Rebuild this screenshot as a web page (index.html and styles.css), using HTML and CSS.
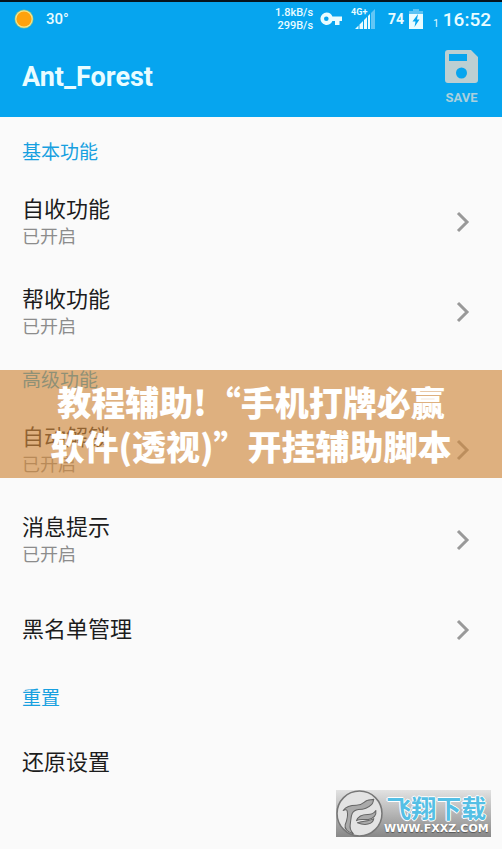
FILE: index.html
```html
<!DOCTYPE html>
<html lang="zh-CN">
<head>
<meta charset="utf-8">
<meta name="viewport" content="width=device-width, initial-scale=1">
<title>Ant_Forest</title>
<link rel="stylesheet" href="styles.css">
</head>
<body>
<header class="top">
  <div class="status">
    <svg class="sun" viewBox="0 0 20 20" aria-hidden="true"><circle cx="10" cy="10" r="9.5" fill="#7fc08f"/><circle cx="10" cy="10" r="8.8" fill="#f6e58e"/><circle cx="10" cy="10" r="7.6" fill="#ffa20d"/></svg>
    <span class="temp">30°</span>
    <span class="rates"><span>1.8kB/s</span><span>299B/s</span></span>
    <svg class="key" viewBox="0 0 22 14" aria-hidden="true"><path fill="#e9fcff" fill-rule="evenodd" d="M6.500 0.500A6.200 6.200 0 1 0 12.400 9H15v4h4.500V9H22V4.500H12.400A6.200 6.200 0 0 0 6.500.5ZM6.300 4.500a2.300 2.300 0 1 1 0 4.600 2.300 2.300 0 0 1 0-4.600Z"/></svg>
    <span class="signal">
      <span class="network">4G+</span>
      <svg class="bars" viewBox="0 0 20 20" aria-hidden="true"><path fill="#e9fcff" d="M0 20 3.500 16.500V20ZM4.500 15.500 8 12V20H4.500ZM9 11 12 8V20H9ZM13 7 15 5V20H13Z"/><path fill="#62c6f5" d="M16 4 20 0V20H16Z"/></svg>
    </span>
    <span class="level">74</span>
    <svg class="battery" viewBox="0 0 14 20" aria-hidden="true"><path fill="#5cc3f4" d="M4 0H10V2H14V5H0V2H4Z"/><path fill="#e9fcff" d="M0 5H14V20H0Z"/><path fill="#06a5ef" d="M9 5 3.500 12.500H6.500L5.500 18 10.500 10.500H8Z"/></svg>
    <span class="sim">1</span>
    <time class="clock">16:52</time>
  </div>
  <div class="bar">
    <h1 class="app-title">Ant_Forest</h1>
    <button class="save" type="button">
      <svg class="save-icon" viewBox="0 0 33 33" aria-hidden="true"><path fill="#bccfd2" fill-rule="evenodd" d="M3 0H26L33 7V30a3 3 0 0 1-3 3H3a3 3 0 0 1-3-3V3A3 3 0 0 1 3 0ZM4 4V11H22V4ZM16.500 17.500a5.500 5.500 0 1 0 0 11 5.500 5.500 0 0 0 0-11Z"/></svg>
      <span>SAVE</span>
    </button>
  </div>
</header>

<main class="settings">
  <h2 class="section">基本功能</h2>
  <a class="row" href="#collect">
    <span class="text"><span class="name">自收功能</span><span class="state">已开启</span></span>
    <svg class="chevron" viewBox="0 0 14 22" aria-hidden="true"><path d="M2 2 11 11 2 20"/></svg>
  </a>
  <a class="row" href="#help">
    <span class="text"><span class="name">帮收功能</span><span class="state">已开启</span></span>
    <svg class="chevron" viewBox="0 0 14 22" aria-hidden="true"><path d="M2 2 11 11 2 20"/></svg>
  </a>

  <h2 class="section">高级功能</h2>
  <a class="row" href="#unlock">
    <span class="text"><span class="name">自动解锁</span><span class="state">已开启</span></span>
    <svg class="chevron" viewBox="0 0 14 22" aria-hidden="true"><path d="M2 2 11 11 2 20"/></svg>
  </a>
  <a class="row" href="#notice">
    <span class="text"><span class="name">消息提示</span><span class="state">已开启</span></span>
    <svg class="chevron" viewBox="0 0 14 22" aria-hidden="true"><path d="M2 2 11 11 2 20"/></svg>
  </a>
  <a class="row" href="#blacklist">
    <span class="text"><span class="name">黑名单管理</span></span>
    <svg class="chevron" viewBox="0 0 14 22" aria-hidden="true"><path d="M2 2 11 11 2 20"/></svg>
  </a>

  <h2 class="section">重置</h2>
  <a class="row row-short" href="#reset">
    <span class="text"><span class="name">还原设置</span></span>
  </a>
</main>

<p class="banner">教程辅助!“手机打牌必赢<br>软件(透视)”开挂辅助脚本</p>

<aside class="watermark">
  <svg class="mark" viewBox="0 0 46 46" aria-hidden="true">
    <circle cx="23" cy="23" r="22" fill="#e3e3e3" stroke="#777" stroke-width="1.500"/>
    <g fill="#aaa" stroke="#666" stroke-width="1" stroke-linejoin="round">
      <path d="M7 20C10 16 15 15 20 15 27 15 27 11 31 10 33 9 35 10 37 9 36 11 37 12 35 14 31 18 27 19 22 19 14 20 15 27 14 33 13 38 15 41 17 43 11 41 8 38 9 34 11 29 12 25 11 21 11 19 9 19 7 20Z"/>
      <path d="M20 30C22 25 26 24 31 24 35 24 37 23 39 20 40 26 36 28 31 29 26 29 23 28 20 30Z"/>
      <path d="M21 32C26 30 32 31 37 28 36 34 28 35 21 32Z"/>
    </g>
  </svg>
  <span class="brand"><span class="brand-name">飞翔下载</span><span class="brand-url">WWW.FXXZ.COM</span></span>
</aside>
</body>
</html>
```
FILE: styles.css
```css
* { box-sizing: border-box; }

body {
  position: relative;
  min-height: 100vh;
  margin: 0;
  background: #fafafa;
  color: #1c1c1c;
  font-family: Roboto, "Noto Sans CJK SC", sans-serif;
}

h1, h2, p { margin: 0; }

.top {
  border-top: 2px solid #06131c;
  background: #06a5ef;
  color: #e9fcff;
}

.status {
  display: flex;
  align-items: center;
  height: 34px;
  padding: 0 11px 0 14px;
}

.sun { width: 20px; height: 20px; }
.temp { margin-left: 12px; font-size: 15px; font-weight: 500; }

.rates {
  display: flex;
  flex-direction: column;
  margin-left: auto;
  font-size: 11px;
  font-weight: 500;
  line-height: 13px;
  text-align: right;
}

.key { width: 22px; height: 14px; margin-left: 7px; }

.signal { position: relative; display: flex; width: 24px; margin-left: 9px; justify-content: flex-end; }
.network { position: absolute; top: -2px; left: 0; font-size: 9px; font-weight: 700; line-height: 10px; }
.bars { width: 20px; height: 20px; }
.level { margin-left: 13px; font-size: 14px; font-weight: 700; }
.battery { width: 14px; height: 20px; margin-left: 5px; }
.sim { margin: 8px 0 0 10px; font-size: 10px; }
.clock { margin-left: 4px; font-size: 19px; font-weight: 500; }

.bar {
  display: flex;
  align-items: center;
  justify-content: space-between;
  height: 81px;
  padding: 0 24px 0 22px;
}

.app-title { font-size: 27px; font-weight: 700; line-height: 32px; }

.save {
  display: flex;
  flex-direction: column;
  align-items: center;
  gap: 7px;
  padding: 2px 0 0;
  border: 0;
  background: none;
  color: #a9d0dd;
  font: 700 13px/16px Roboto, sans-serif;
}
.save-icon { width: 33px; height: 33px; }

.settings { padding-top: 12px; }

.section {
  padding-left: 22px;
  color: #17a0e0;
  font-size: 19px;
  font-weight: 400;
  line-height: 48px;
}

.row {
  display: flex;
  align-items: center;
  justify-content: space-between;
  min-height: 90px;
  padding: 0 32px 0 22px;
  color: inherit;
  text-decoration: none;
}
.row-short { min-height: 80px; }

.text { display: flex; flex-direction: column; }
.name { font-size: 22px; line-height: 30px; }
.state { color: #8c8c8c; font-size: 18px; line-height: 24px; }

.chevron {
  width: 14px;
  height: 22px;
  fill: none;
  stroke: #999;
  stroke-width: 3;
}

.banner {
  position: absolute;
  top: 370px;
  right: 0;
  left: 0;
  padding: 10px 0;
  background: rgba(207, 136, 61, 0.65);
  color: #fff;
  font: 900 34px/44px "Noto Sans CJK SC", sans-serif;
  text-align: center;
}

.watermark {
  position: absolute;
  right: 11px;
  bottom: 12px;
  display: flex;
  align-items: center;
  width: 155px;
  height: 47px;
  background: linear-gradient(#e2e2e2, #888);
}
.mark { flex: none; width: 47px; height: 47px; }
.brand { display: flex; flex-direction: column; align-items: center; margin-left: 1px; }
.brand-name {
  color: #55bfe5;
  font: 700 25px/30px "Noto Sans CJK SC", sans-serif;
  text-shadow: 1px 0 #fff, -1px 0 #fff, 0 1px #fff, 0 -1px #fff;
}
.brand-url {
  color: #fff;
  font: 700 11px/14px "DejaVu Sans", sans-serif;
  text-shadow: 0 1px 1px #555;
}
```
